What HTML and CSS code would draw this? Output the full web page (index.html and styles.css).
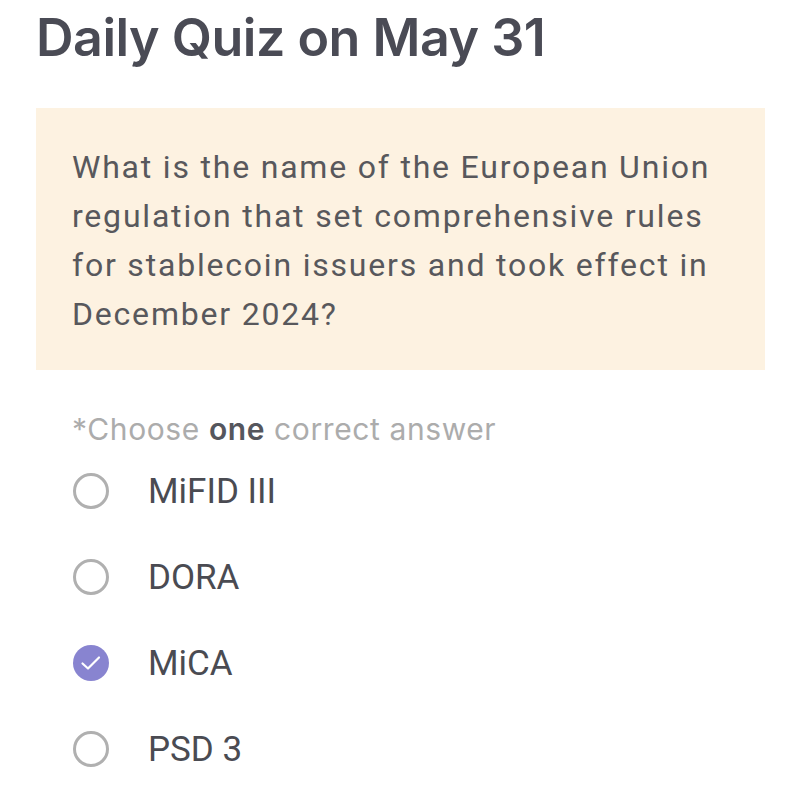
FILE: index.html
```html
<!DOCTYPE html>
<html lang="en">

<head>
    <meta charset="UTF-8">
    <meta name="viewport" content="width=device-width, initial-scale=1.0">
    <title>Daily Quiz</title>
    <link rel="stylesheet" href="styles.css">
</head>

<body>
    <div class="quiz">
        <h1 class="title">Daily Quiz on May 31</h1>

        <div class="question">
            <p>What is the name of the European Union regulation that set comprehensive rules for stablecoin issuers and took effect in December 2024?</p>
        </div>

        <p class="hint">*Choose <b>one</b> correct answer</p>

        <ul class="options">
            <li class="option">
                <span class="radio"></span>
                <span class="label">MiFID III</span>
            </li>
            <li class="option">
                <span class="radio"></span>
                <span class="label">DORA</span>
            </li>
            <li class="option checked">
                <span class="radio">
                    <svg width="36" height="36" viewBox="0 0 36 36"><path d="M9.5 18.5 L15 23.5 L26 12.5" fill="none" stroke="#fff" stroke-width="2.2" stroke-linecap="round" stroke-linejoin="round"/></svg>
                </span>
                <span class="label">MiCA</span>
            </li>
            <li class="option">
                <span class="radio"></span>
                <span class="label">PSD 3</span>
            </li>
        </ul>
    </div>
</body>

</html>
```

FILE: styles.css
```css
* {
    padding: 0;
    margin: 0;
    box-sizing: border-box;
}

body {
    background-color: #fff;
    font-family: Roboto, "Liberation Sans", sans-serif;
}

.quiz {
    padding: 0 35px 0 36px;
}

.title {
    font-family: Inter, "Liberation Sans", sans-serif;
    font-size: 52px;
    font-weight: 600;
    color: #4a4b55;
    line-height: 76px;
    letter-spacing: -0.5px;
}

.question {
    margin-top: 32px;
    background-color: #fdf2e1;
    padding: 35px 36px 31px;
}

.question p {
    font-size: 32px;
    line-height: 49px;
    color: #58585c;
    letter-spacing: 1.8px;
}

.hint {
    font-family: Inter, "Liberation Sans", sans-serif;
    font-size: 30px;
    line-height: 40px;
    color: #acacac;
    letter-spacing: 0.6px;
    margin: 39px 0 0 36px;
}

.hint b {
    color: #55565d;
    font-weight: 600;
}

.options {
    list-style: none;
    margin: -1px 0 0 37px;
}

.option {
    display: flex;
    align-items: center;
    height: 86px;
}

.radio {
    width: 36px;
    height: 36px;
    border: 3px solid #b0b0b0;
    border-radius: 50%;
    display: flex;
    align-items: center;
    justify-content: center;
    flex-shrink: 0;
}

.checked .radio {
    border: none;
    background-color: #8884d0;
}

.label {
    margin-left: 39px;
    font-size: 35px;
    color: #4a4b52;
    letter-spacing: 0;
}
```
